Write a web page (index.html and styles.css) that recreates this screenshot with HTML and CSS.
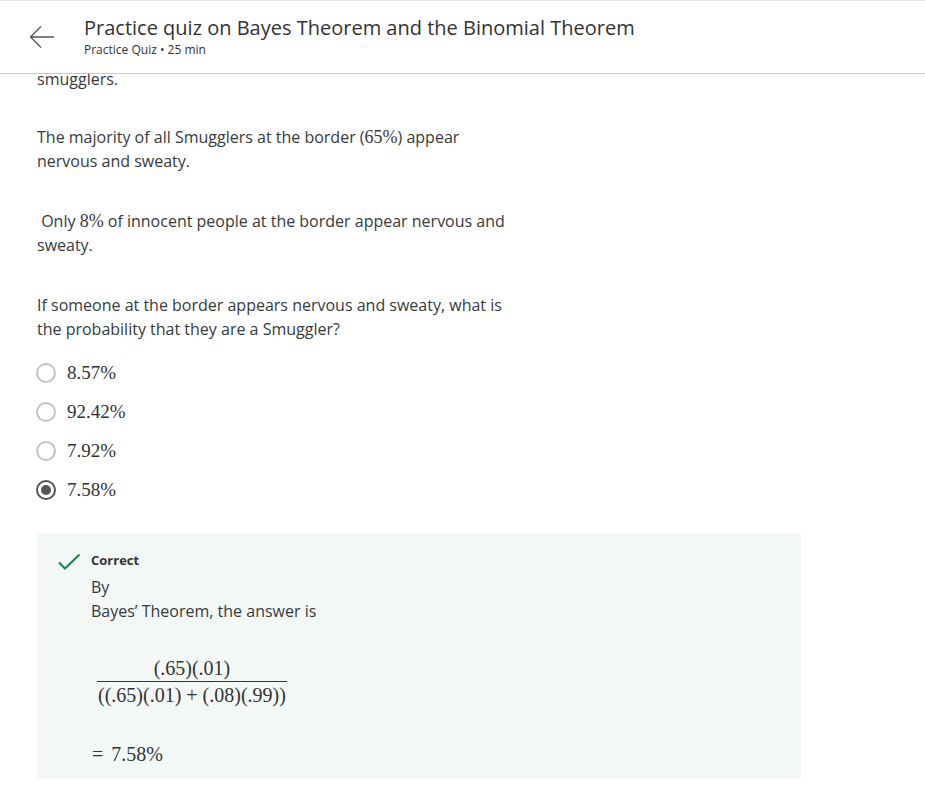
FILE: index.html
```html
<!DOCTYPE html>
<html lang="en">
<head>
<meta charset="utf-8">
<title>Practice quiz on Bayes Theorem and the Binomial Theorem</title>
<link rel="stylesheet" href="styles.css">
</head>
<body>
<header class="topbar">
  <button class="back" aria-label="Back">
    <svg width="26" height="24" viewBox="0 0 26 24"><path d="M25 12H2M12 1.5L1.5 12L12 22.5" fill="none" stroke="#555" stroke-width="1.3"/></svg>
  </button>
  <div class="titles">
    <h1 class="title">Practice quiz on Bayes Theorem and the Binomial Theorem</h1>
    <div class="subtitle">Practice Quiz • 25 min</div>
  </div>
</header>
<main class="content">
  <div class="question">
    <p class="para first">smugglers.</p>
    <p class="para">The majority of all Smugglers at the border (<span class="math">65%</span>) appear nervous and sweaty.</p>
    <p class="para">&nbsp;Only <span class="math">8%</span> of innocent people at the border appear nervous and sweaty.</p>
    <p class="para">If someone at the border appears nervous and sweaty, what is the probability that they are a Smuggler?</p>
  </div>
  <div class="options">
    <label class="option"><span class="radio"></span><span class="math opt">8.57%</span></label>
    <label class="option"><span class="radio"></span><span class="math opt">92.42%</span></label>
    <label class="option"><span class="radio"></span><span class="math opt">7.92%</span></label>
    <label class="option"><span class="radio checked"></span><span class="math opt">7.58%</span></label>
  </div>
  <section class="feedback">
    <div class="check">
      <svg width="24" height="18" viewBox="0 0 24 18"><path d="M2 9.5L8 15.5L22.5 1.5" fill="none" stroke="#1f8354" stroke-width="2.2"/></svg>
    </div>
    <div class="fb-body">
      <div class="fb-label">Correct</div>
      <p class="fb-text">By<br>Bayes’ Theorem, the answer is</p>
      <div class="display">
        <span class="frac">
          <span class="num math">(.65)(.01)</span>
          <span class="den math">((.65)(.01) + (.08)(.99))</span>
        </span>
      </div>
      <div class="display result math">= 7.58%</div>
    </div>
  </section>
</main>
</body>
</html>
```
FILE: styles.css
```css
html, body {
  margin: 0;
  padding: 0;
  background: #fff;
}
body {
  font-family: "Open Sans", "Liberation Sans", sans-serif;
  color: #373a3c;
  border-top: 1px solid #e1e1e1;
}
.topbar {
  position: fixed;
  top: 1px;
  left: 0;
  right: 0;
  height: 72px;
  background: #fff;
  border-bottom: 1px solid #c8c8c8;
  display: flex;
  align-items: flex-start;
  z-index: 2;
}
.back {
  border: 0;
  background: none;
  padding: 0;
  margin: 24px 0 0 29px;
  width: 26px;
  height: 24px;
  display: flex;
}
.titles {
  margin-left: 29px;
  padding-top: 15px;
}
.title {
  margin: 0;
  font-size: 20px;
  line-height: 24px;
  font-weight: 400;
  color: #333;
}
.subtitle {
  margin-top: 2px;
  font-size: 12px;
  line-height: 16px;
  color: #333;
}
.content {
  padding: 66px 0 12px 37px;
}
.question {
  width: 478px;
}
.para {
  margin: 0 0 36px;
  font-size: 16px;
  line-height: 24px;
}
.para.first {
  margin-bottom: 34px;
}
.para:last-child {
  margin-bottom: 0;
}
.math {
  font-family: "Liberation Serif", "Times New Roman", serif;
  font-size: 18px;
  line-height: 1;
}
.options {
  margin-top: 12px;
  display: flex;
  flex-direction: column;
}
.option {
  height: 39px;
  display: flex;
  align-items: center;
}
.radio {
  box-sizing: border-box;
  width: 20px;
  height: 20px;
  border: 2px solid #c3c3c3;
  border-radius: 50%;
  margin-left: -1px;
  display: flex;
  align-items: center;
  justify-content: center;
}
.radio.checked {
  border-color: #555;
}
.radio.checked::after {
  content: "";
  width: 10px;
  height: 10px;
  border-radius: 50%;
  background: #555;
}
.opt {
  margin-left: 11px;
  font-size: 19px;
  color: #333;
}
.feedback {
  margin-top: 24px;
  width: 764px;
  box-sizing: border-box;
  background: #f3f8f6;
  padding: 18px 20px 13px 20px;
  display: flex;
  gap: 10px;
}
.check {
  width: 24px;
  padding-top: 2px;
}
.fb-body {
  flex: 1;
}
.fb-label {
  font-size: 13px;
  line-height: 18px;
  font-weight: 700;
  color: #333;
}
.fb-text {
  margin: 6px 0 0;
  font-size: 16px;
  line-height: 24px;
}
.display {
  margin-top: 34px;
  padding-left: 6px;
  color: #333;
}
.frac {
  display: inline-flex;
  flex-direction: column;
  align-items: stretch;
}
.num {
  text-align: center;
  font-size: 20px;
  line-height: 22px;
  padding-bottom: 2px;
  border-bottom: 1px solid #333;
}
.den {
  text-align: center;
  font-size: 20px;
  line-height: 22px;
  padding: 2px 1px 0;
}
.display.result {
  margin-top: 36px;
  padding-left: 1px;
  font-size: 20px;
  line-height: 24px;
  word-spacing: 3px;
}
```
